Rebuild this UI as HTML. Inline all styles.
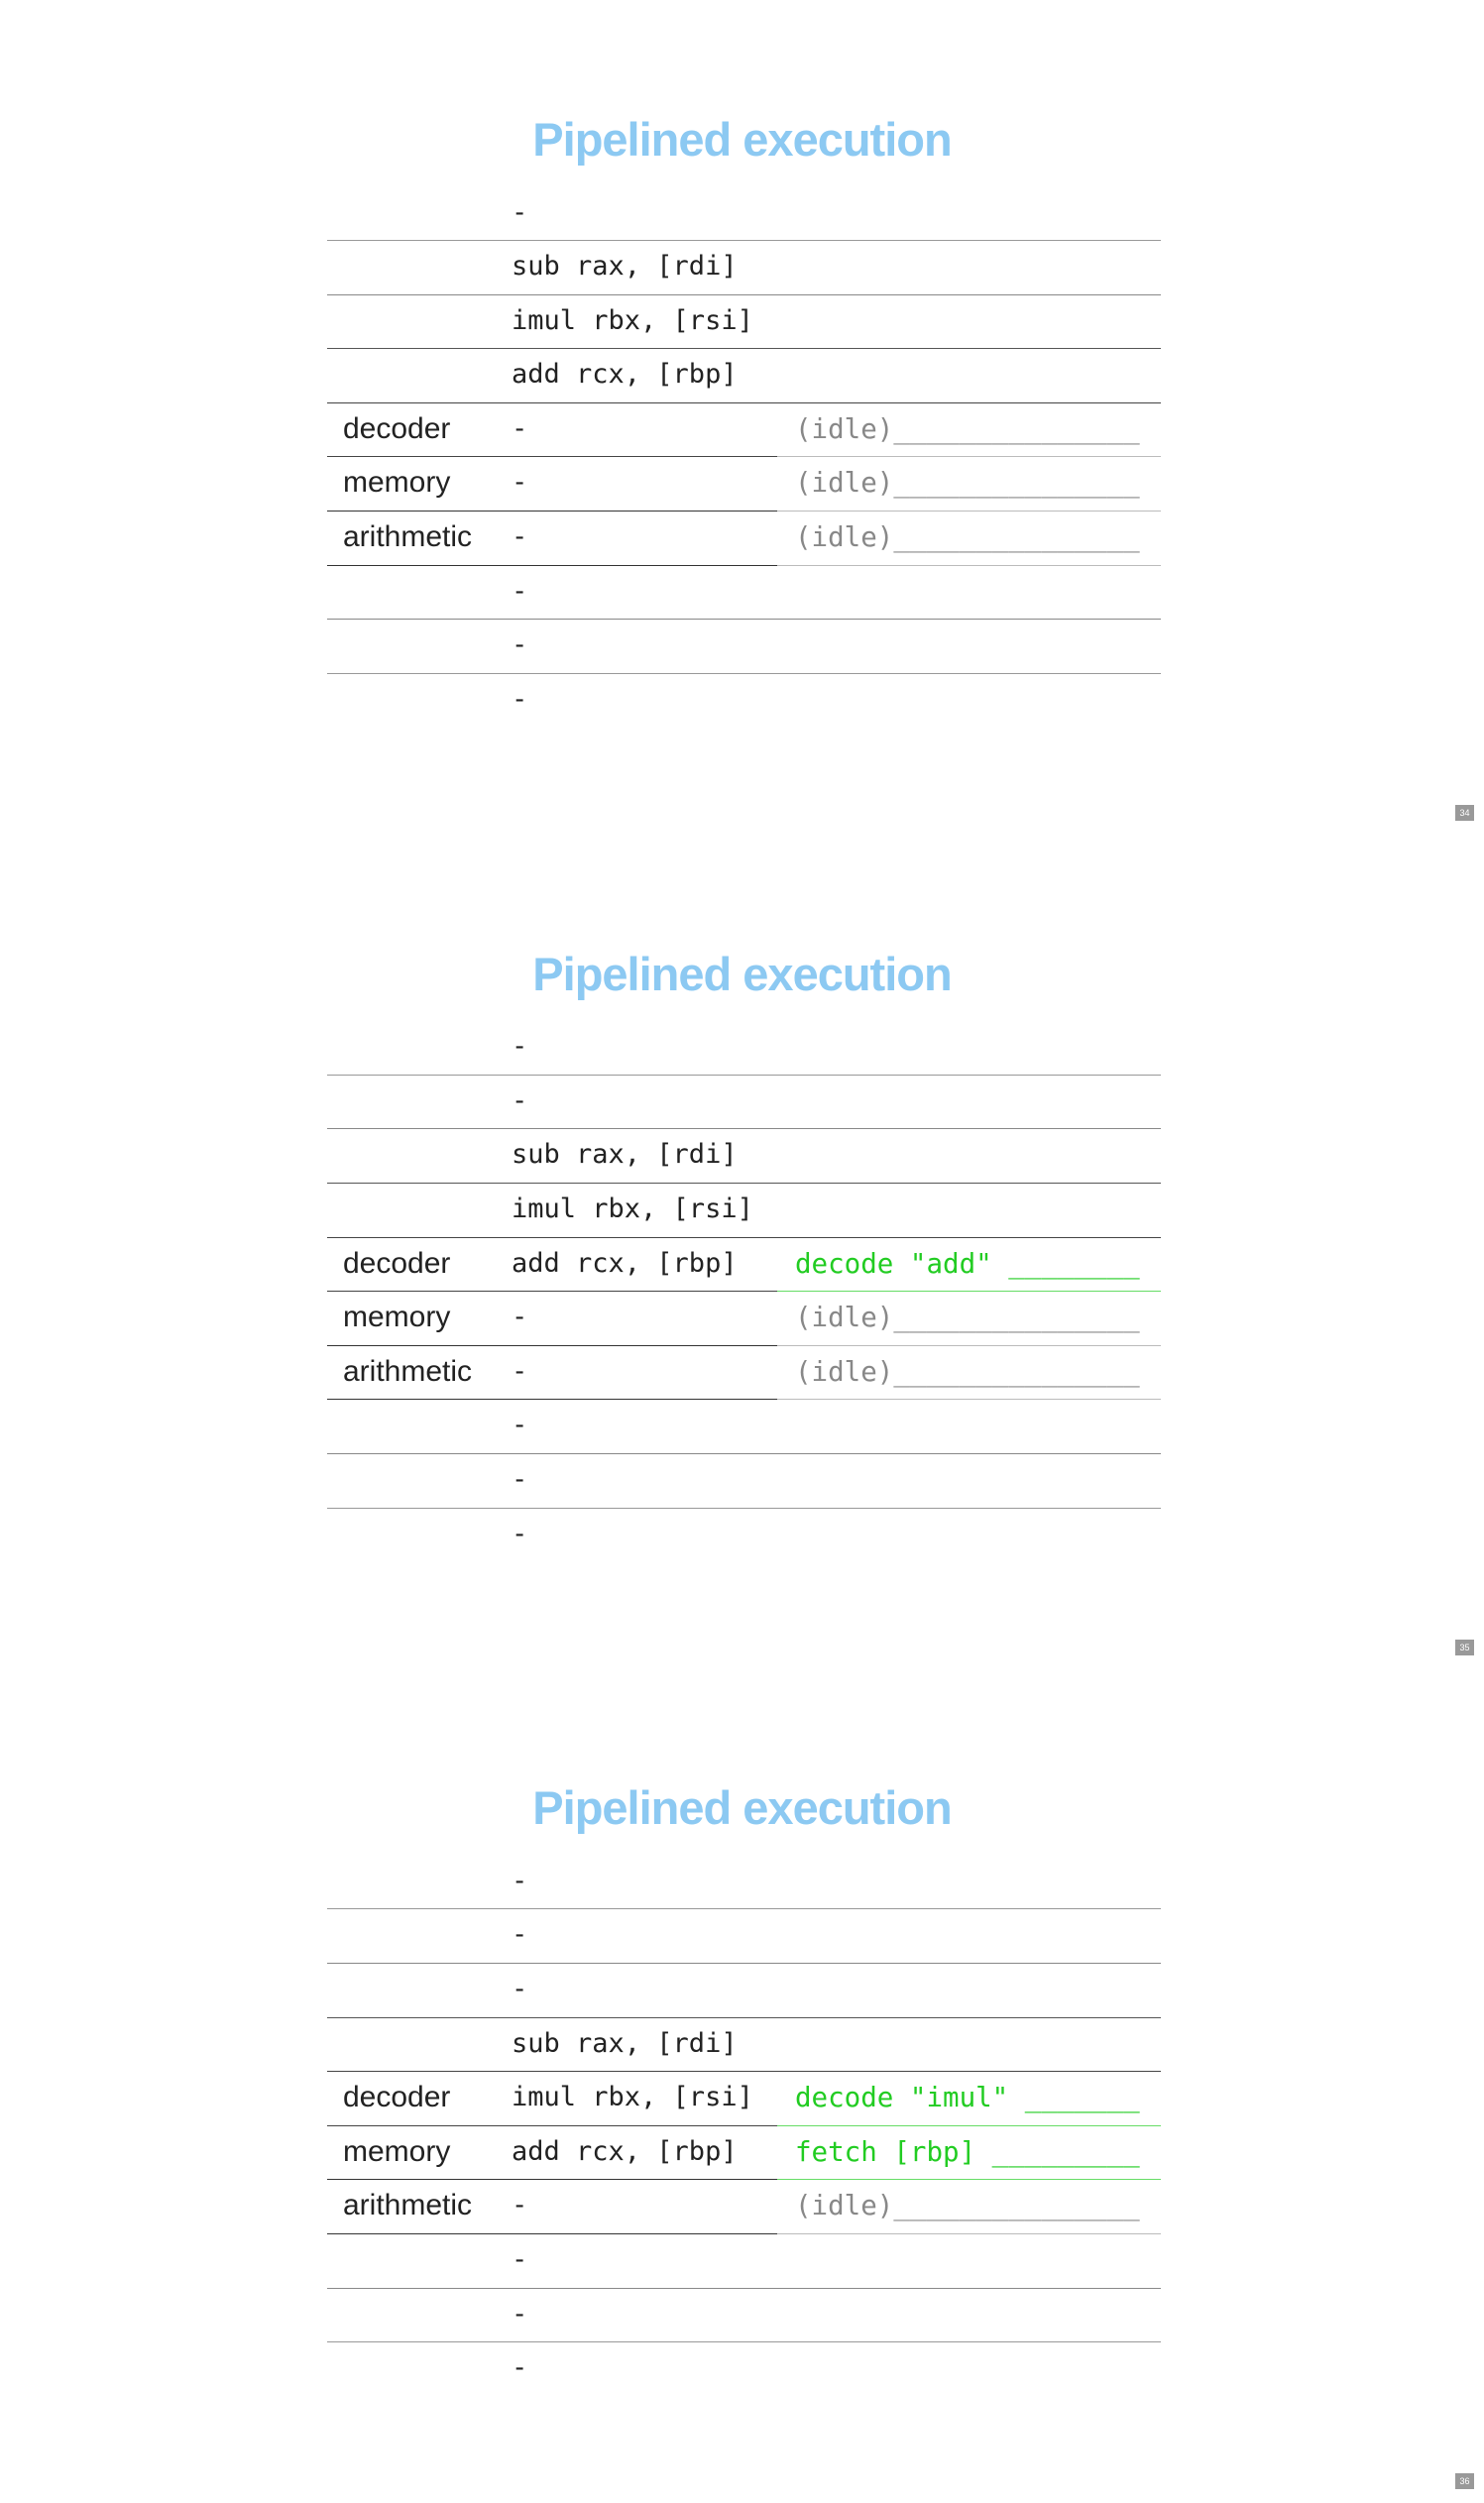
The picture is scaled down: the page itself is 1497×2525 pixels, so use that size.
<!DOCTYPE html>
<html><head><meta charset="utf-8"><style>
html,body{margin:0;padding:0;background:#fff;width:1497px;height:2525px;overflow:hidden}
.s{position:absolute;left:0;width:1497px;height:841.67px}
.t{position:absolute;top:113px;left:0;width:1497px;text-align:center;font:bold 47px "Liberation Sans",sans-serif;color:#8cc9f2;letter-spacing:-1px;margin:0}
.tb{position:absolute;left:330px;top:187.5px;width:841px}
.r{position:relative;height:54.6px;font-size:30px}
.r span{position:absolute;top:0;line-height:54.6px;white-space:pre}
.n{left:16px;font-family:"Liberation Sans",sans-serif;color:#222}
.c{left:186px;font-family:"DejaVu Sans Mono","Liberation Mono",monospace;font-size:27px;color:#222}
.x{left:472px;font-family:"DejaVu Sans Mono","Liberation Mono",monospace;font-size:27.5px}
.idle{color:#888}.g{color:#22cc22}
.bl,.br{position:absolute;bottom:-1px;height:1px}
.bl{left:0;width:454px}.br{left:454px;width:387px}
.pn{position:absolute;left:1468px;width:19px;height:16px;background:#999;color:#fff;font:9px "Liberation Sans",sans-serif;text-align:center;line-height:16px}
</style></head><body>

<div class="s" style="top:0">
<div class="t">Pipelined execution</div>
<div class="tb">
<div class="r"><span class="c">-</span><div class="bl" style="background:#999"></div><div class="br" style="background:#999"></div></div>
<div class="r"><span class="c">sub rax, [rdi]</span><div class="bl" style="background:#888"></div><div class="br" style="background:#888"></div></div>
<div class="r"><span class="c">imul rbx, [rsi]</span><div class="bl" style="background:#555"></div><div class="br" style="background:#555"></div></div>
<div class="r"><span class="c">add rcx, [rbp]</span><div class="bl" style="background:#444"></div><div class="br" style="background:#444"></div></div>
<div class="r"><span class="n">decoder</span><span class="c">-</span><span class="x idle">(idle)_______________</span><div class="bl" style="background:#444"></div><div class="br" style="background:#bbb"></div></div>
<div class="r"><span class="n">memory</span><span class="c">-</span><span class="x idle">(idle)_______________</span><div class="bl" style="background:#333"></div><div class="br" style="background:#bbb"></div></div>
<div class="r"><span class="n">arithmetic</span><span class="c">-</span><span class="x idle">(idle)_______________</span><div class="bl" style="background:#333"></div><div class="br" style="background:#bbb"></div></div>
<div class="r"><span class="c">-</span><div class="bl" style="background:#888"></div><div class="br" style="background:#888"></div></div>
<div class="r"><span class="c">-</span><div class="bl" style="background:#999"></div><div class="br" style="background:#999"></div></div>
<div class="r"><span class="c">-</span></div>
</div>
<div class="pn" style="top:812px">34</div>
</div>

<div class="s" style="top:841.67px">
<div class="t">Pipelined execution</div>
<div class="tb">
<div class="r"><span class="c">-</span><div class="bl" style="background:#999"></div><div class="br" style="background:#999"></div></div>
<div class="r"><span class="c">-</span><div class="bl" style="background:#888"></div><div class="br" style="background:#888"></div></div>
<div class="r"><span class="c">sub rax, [rdi]</span><div class="bl" style="background:#555"></div><div class="br" style="background:#555"></div></div>
<div class="r"><span class="c">imul rbx, [rsi]</span><div class="bl" style="background:#444"></div><div class="br" style="background:#444"></div></div>
<div class="r"><span class="n">decoder</span><span class="c">add rcx, [rbp]</span><span class="x g">decode "add" ________</span><div class="bl" style="background:#444"></div><div class="br" style="background:#66dd66"></div></div>
<div class="r"><span class="n">memory</span><span class="c">-</span><span class="x idle">(idle)_______________</span><div class="bl" style="background:#333"></div><div class="br" style="background:#bbb"></div></div>
<div class="r"><span class="n">arithmetic</span><span class="c">-</span><span class="x idle">(idle)_______________</span><div class="bl" style="background:#333"></div><div class="br" style="background:#bbb"></div></div>
<div class="r"><span class="c">-</span><div class="bl" style="background:#888"></div><div class="br" style="background:#888"></div></div>
<div class="r"><span class="c">-</span><div class="bl" style="background:#999"></div><div class="br" style="background:#999"></div></div>
<div class="r"><span class="c">-</span></div>
</div>
<div class="pn" style="top:812px">35</div>
</div>

<div class="s" style="top:1683.33px">
<div class="t">Pipelined execution</div>
<div class="tb">
<div class="r"><span class="c">-</span><div class="bl" style="background:#999"></div><div class="br" style="background:#999"></div></div>
<div class="r"><span class="c">-</span><div class="bl" style="background:#888"></div><div class="br" style="background:#888"></div></div>
<div class="r"><span class="c">-</span><div class="bl" style="background:#555"></div><div class="br" style="background:#555"></div></div>
<div class="r"><span class="c">sub rax, [rdi]</span><div class="bl" style="background:#444"></div><div class="br" style="background:#444"></div></div>
<div class="r"><span class="n">decoder</span><span class="c">imul rbx, [rsi]</span><span class="x g">decode "imul" _______</span><div class="bl" style="background:#444"></div><div class="br" style="background:#66dd66"></div></div>
<div class="r"><span class="n">memory</span><span class="c">add rcx, [rbp]</span><span class="x g">fetch [rbp] _________</span><div class="bl" style="background:#333"></div><div class="br" style="background:#66dd66"></div></div>
<div class="r"><span class="n">arithmetic</span><span class="c">-</span><span class="x idle">(idle)_______________</span><div class="bl" style="background:#333"></div><div class="br" style="background:#bbb"></div></div>
<div class="r"><span class="c">-</span><div class="bl" style="background:#888"></div><div class="br" style="background:#888"></div></div>
<div class="r"><span class="c">-</span><div class="bl" style="background:#999"></div><div class="br" style="background:#999"></div></div>
<div class="r"><span class="c">-</span></div>
</div>
<div class="pn" style="top:812px">36</div>
</div>

</body></html>
